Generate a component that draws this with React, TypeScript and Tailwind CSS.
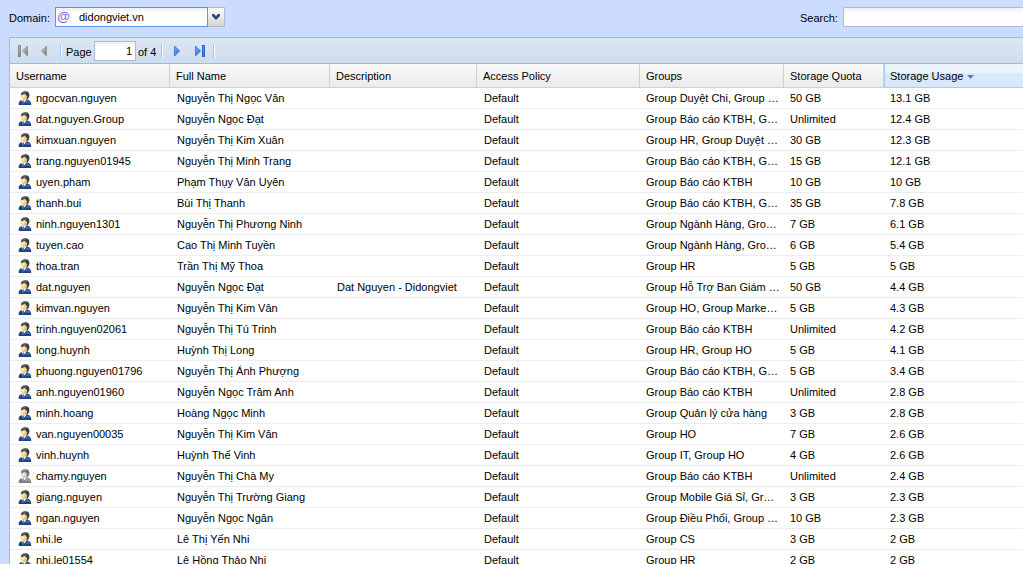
import React from "react";

type User = {
  username: string;
  fullName: string;
  description?: string;
  groups: string;
  quota: string;
  usage: string;
  disabled?: boolean;
};

const users: User[] = [
  { username: "ngocvan.nguyen", fullName: "Nguyễn Thị Ngọc Vân", groups: "Group Duyệt Chi, Group …", quota: "50 GB", usage: "13.1 GB" },
  { username: "dat.nguyen.Group", fullName: "Nguyễn Ngọc Đạt", groups: "Group Báo cáo KTBH, G…", quota: "Unlimited", usage: "12.4 GB" },
  { username: "kimxuan.nguyen", fullName: "Nguyễn Thị Kim Xuân", groups: "Group HR, Group Duyệt …", quota: "30 GB", usage: "12.3 GB" },
  { username: "trang.nguyen01945", fullName: "Nguyễn Thị Minh Trang", groups: "Group Báo cáo KTBH, G…", quota: "15 GB", usage: "12.1 GB" },
  { username: "uyen.pham", fullName: "Phạm Thụy Vân Uyên", groups: "Group Báo cáo KTBH", quota: "10 GB", usage: "10 GB" },
  { username: "thanh.bui", fullName: "Bùi Thị Thanh", groups: "Group Báo cáo KTBH, G…", quota: "35 GB", usage: "7.8 GB" },
  { username: "ninh.nguyen1301", fullName: "Nguyễn Thị Phương Ninh", groups: "Group Ngành Hàng, Gro…", quota: "7 GB", usage: "6.1 GB" },
  { username: "tuyen.cao", fullName: "Cao Thị Minh Tuyền", groups: "Group Ngành Hàng, Gro…", quota: "6 GB", usage: "5.4 GB" },
  { username: "thoa.tran", fullName: "Trần Thị Mỹ Thoa", groups: "Group HR", quota: "5 GB", usage: "5 GB" },
  { username: "dat.nguyen", fullName: "Nguyễn Ngọc Đạt", description: "Dat Nguyen - Didongviet", groups: "Group Hỗ Trợ Ban Giám …", quota: "50 GB", usage: "4.4 GB" },
  { username: "kimvan.nguyen", fullName: "Nguyễn Thị Kim Vân", groups: "Group HO, Group Marke…", quota: "5 GB", usage: "4.3 GB" },
  { username: "trinh.nguyen02061", fullName: "Nguyễn Thị Tú Trinh", groups: "Group Báo cáo KTBH", quota: "Unlimited", usage: "4.2 GB" },
  { username: "long.huynh", fullName: "Huỳnh Thị Long", groups: "Group HR, Group HO", quota: "5 GB", usage: "4.1 GB" },
  { username: "phuong.nguyen01796", fullName: "Nguyễn Thị Ánh Phượng", groups: "Group Báo cáo KTBH, G…", quota: "5 GB", usage: "3.4 GB" },
  { username: "anh.nguyen01960", fullName: "Nguyễn Ngọc Trâm Anh", groups: "Group Báo cáo KTBH", quota: "Unlimited", usage: "2.8 GB" },
  { username: "minh.hoang", fullName: "Hoàng Ngọc Minh", groups: "Group Quản lý cửa hàng", quota: "3 GB", usage: "2.8 GB" },
  { username: "van.nguyen00035", fullName: "Nguyễn Thị Kim Vân", groups: "Group HO", quota: "7 GB", usage: "2.6 GB" },
  { username: "vinh.huynh", fullName: "Huỳnh Thế Vinh", groups: "Group IT, Group HO", quota: "4 GB", usage: "2.6 GB" },
  { username: "chamy.nguyen", fullName: "Nguyễn Thị Chà My", groups: "Group Báo cáo KTBH", quota: "Unlimited", usage: "2.4 GB", disabled: true },
  { username: "giang.nguyen", fullName: "Nguyễn Thị Trường Giang", groups: "Group Mobile Giá Sỉ, Gr…", quota: "3 GB", usage: "2.3 GB" },
  { username: "ngan.nguyen", fullName: "Nguyễn Ngọc Ngân", groups: "Group Điều Phối, Group …", quota: "10 GB", usage: "2.3 GB" },
  { username: "nhi.le", fullName: "Lê Thị Yến Nhi", groups: "Group CS", quota: "3 GB", usage: "2 GB" },
  { username: "nhi.le01554", fullName: "Lê Hồng Thảo Nhi", groups: "Group HR", quota: "2 GB", usage: "2 GB" },
];

const headers = ["Username", "Full Name", "Description", "Access Policy", "Groups", "Storage Quota"];

function UserIcon({ disabled }: { disabled?: boolean }) {
  const c = disabled
    ? { hair: "#707070", hairHi: "#a0a0a0", face: "#cfcfcf", faceHi: "#ececec", body: "#808080", bodyHi: "#a6a6a6", tie: "#777777" }
    : { hair: "#3a4048", hairHi: "#6d747c", face: "#ecc878", faceHi: "#fbeeb4", body: "#22427f", bodyHi: "#456fb6", tie: "#33508a" };
  return (
    <svg viewBox="0 0 14 14" className="h-3.5 w-3.5 shrink-0" aria-hidden="true">
      <path d="M0.8 14 C0.2 11.6 1.2 9.8 3.8 9 L9.6 8.4 C12 9.2 13.4 11 13.2 14 Z" fill={c.body} />
      <path d="M7.6 10.4 L10 9.4 C11.4 10 12.2 11 12.4 12.4 C10.8 11.2 9 11 7.4 12.6 Z" fill={c.bodyHi} />
      <path d="M3.6 9 L5 12.8 L8.8 8.6 L6 7.8 Z" fill="#f6f7fa" />
      <path d="M4.6 9.8 L5.8 9.6 L5.8 12 L5 13 L4.3 11.6 Z" fill={c.tie} />
      <path d="M3 4.4 C2.6 1.8 4.6 0.2 7.4 0.2 C10.4 0.2 11.8 2.2 11.4 4.8 C11.2 6.6 10.2 8 8.8 8.6 L5 6 Z" fill={c.hair} />
      <path d="M4.6 1.9 C5.8 0.8 7.8 0.8 9.2 1.6 C7.8 1.6 6.4 1.9 5 2.7 Z" fill={c.hairHi} />
      <path d="M3 4 C4.8 4 6.2 3.2 7 2.8 C7.6 4 8.4 4.8 9.2 5.2 C9.2 7.4 8 9.2 6.2 9.2 C4.2 9.2 2.8 7 3 4 Z" fill={c.face} />
      <path d="M3.5 4.6 C4.8 4.6 5.8 4.2 6.6 3.8 C6.9 5.4 6.4 6.8 5.4 7.4 C4.2 7 3.5 6 3.5 4.6 Z" fill={c.faceHi} />
    </svg>
  );
}

function PageIcon({ kind }: { kind: "first" | "prev" | "next" | "last" }) {
  const back = kind === "first" || kind === "prev";
  const id = "fill-" + kind;
  return (
    <svg viewBox="0 0 16 16" className="h-4 w-4" aria-hidden="true">
      <defs>
        <linearGradient id={id} x1="0" y1="0" x2="1" y2="1">
          <stop offset="0" stopColor={back ? "#d9d9d9" : "#8dbdf8"} />
          <stop offset="1" stopColor={back ? "#6f6f6f" : "#1a52cf"} />
        </linearGradient>
      </defs>
      {kind === "first" && (
        <>
          <rect x="3.5" y="2.5" width="2" height="11" fill={`url(#${id})`} stroke="#8c8c8c" />
          <path d="M12.5 3 L7.5 8 L12.5 13 Z" fill={`url(#${id})`} stroke="#909090" strokeWidth="0.8" />
        </>
      )}
      {kind === "prev" && <path d="M10.5 3 L5.5 8 L10.5 13 Z" fill={`url(#${id})`} stroke="#909090" strokeWidth="0.8" />}
      {kind === "next" && <path d="M5.5 3 L10.5 8 L5.5 13 Z" fill={`url(#${id})`} stroke="#2f68d8" strokeWidth="0.8" />}
      {kind === "last" && (
        <>
          <path d="M4.5 3 L9.5 8 L4.5 13 Z" fill={`url(#${id})`} stroke="#2f68d8" strokeWidth="0.8" />
          <rect x="11.5" y="2.5" width="2" height="11" fill={`url(#${id})`} stroke="#2f62c9" />
        </>
      )}
    </svg>
  );
}

function Separator() {
  return <span className="h-3.5 w-0.5 border-l border-r border-l-[#98c8ff] border-r-white" />;
}

export default function App() {
  return (
    <div className="flex h-screen flex-col overflow-hidden bg-[#ccdcff] pl-[9px] font-['Liberation_Sans',Arial,sans-serif] text-[11px] text-black">
      <div className="flex h-[37px] shrink-0 items-start justify-between pt-[7px]">
        <div className="flex items-center">
          <label htmlFor="domain" className="w-[46px] pt-0.5">Domain:</label>
          <div className="relative">
            <select
              id="domain"
              defaultValue="didongviet.vn"
              className="block h-5 w-[170px] appearance-none border border-[#5697f0] bg-white bg-linear-to-b from-[#eef1f1] to-white to-30% pl-[23px] pr-5 text-[11px] outline-none"
            >
              <option>didongviet.vn</option>
            </select>
            <span className="pointer-events-none absolute left-0.5 top-0 text-[13px] font-bold italic leading-5 text-[#7a70e6]" aria-hidden="true">@</span>
            <span className="pointer-events-none absolute right-0 top-0 flex h-5 w-[17px] items-center justify-center border-y border-r border-[#b5b8c8] bg-linear-to-b from-white to-[#d4d4d4]">
              <svg viewBox="0 0 10 6" className="h-1.5 w-2.5" aria-hidden="true">
                <path d="M1 0 H3 L5 2 L7 0 H9 V2 L5 6 L1 2 Z" fill="#2c4a7c" />
              </svg>
            </span>
            <span className="pointer-events-none absolute right-[17px] top-0 h-5 w-px bg-[#5697f0]" />
          </div>
        </div>
        <div className="flex items-center">
          <label htmlFor="search" className="w-[43px] pt-0.5">Search:</label>
          <input
            id="search"
            type="text"
            className="h-5 w-[180px] border border-r-0 border-[#b5b8c8] bg-white bg-linear-to-b from-[#eef1f1] to-white to-30% px-1 outline-none"
          />
        </div>
      </div>

      <div className="flex min-h-0 flex-1 flex-col overflow-hidden border-l border-t border-[#99bbe8] bg-white">
        <div className="flex h-[26px] shrink-0 items-center border-b border-[#99bbe8] bg-linear-to-b from-[#dbe7f4] to-[#cddcee] pl-[5px]">
          <div className="flex w-[45px] gap-[5px]">
            <button type="button" disabled aria-label="First page"><PageIcon kind="first" /></button>
            <button type="button" disabled aria-label="Previous page"><PageIcon kind="prev" /></button>
          </div>
          <Separator />
          <label htmlFor="page" className="w-8 pl-1 pt-[3px]">Page</label>
          <input
            id="page"
            type="text"
            defaultValue="1"
            className="h-5 w-[42px] border border-[#b5b8c8] bg-white bg-linear-to-b from-[#eef1f1] to-white to-30% px-[3px] text-right outline-none"
          />
          <span className="w-[25px] pl-0.5 pt-[3px]">of 4</span>
          <Separator />
          <div className="flex w-[50px] gap-1.5 pl-1.5">
            <button type="button" aria-label="Next page"><PageIcon kind="next" /></button>
            <button type="button" aria-label="Last page"><PageIcon kind="last" /></button>
          </div>
          <Separator />
        </div>

        <table className="w-full table-fixed border-separate border-spacing-0 whitespace-nowrap text-left">
          <colgroup>
            <col className="w-[160px]" />
            <col className="w-[160px]" />
            <col className="w-[147px]" />
            <col className="w-[163px]" />
            <col className="w-[144px]" />
            <col className="w-[100px]" />
            <col />
          </colgroup>
          <thead>
            <tr className="h-6">
              {headers.map((h) => (
                <th key={h} scope="col" className="border-b border-r border-[#d0d0d0] bg-linear-to-b from-[#fafafa] to-[#ebebeb] p-0 pl-1.5 pt-0.5 font-normal">
                  {h}
                </th>
              ))}
              <th scope="col" aria-sort="descending" className="border-b border-l border-[#aaccf6] bg-linear-to-b from-[#ebf3fd] from-40% to-[#d9e8fb] to-40% p-0 pl-[5px] pt-0.5 font-normal">
                <span className="flex items-center gap-1">
                  Storage Usage
                  <svg viewBox="0 0 7 4" className="h-1 w-[7px]" aria-hidden="true">
                    <path d="M0 0 H7 L3.5 4 Z" fill="#4f86cb" />
                  </svg>
                </span>
              </th>
            </tr>
          </thead>
          <tbody>
            {users.map((u) => (
              <tr key={u.username} className="h-[21px] *:overflow-hidden *:border-b *:border-[#ededed] *:py-0 *:pr-0">
                <td className="pl-2">
                  <span className="flex items-center gap-1">
                    <UserIcon disabled={u.disabled} />
                    {u.username}
                  </span>
                </td>
                <td className="pl-[7px]">{u.fullName}</td>
                <td className="pl-[7px]">{u.description}</td>
                <td className="pl-[7px]">Default</td>
                <td className="pl-1.5">{u.groups}</td>
                <td className="pl-1.5">{u.quota}</td>
                <td className="pl-1.5">{u.usage}</td>
              </tr>
            ))}
          </tbody>
        </table>
      </div>
    </div>
  );
}
